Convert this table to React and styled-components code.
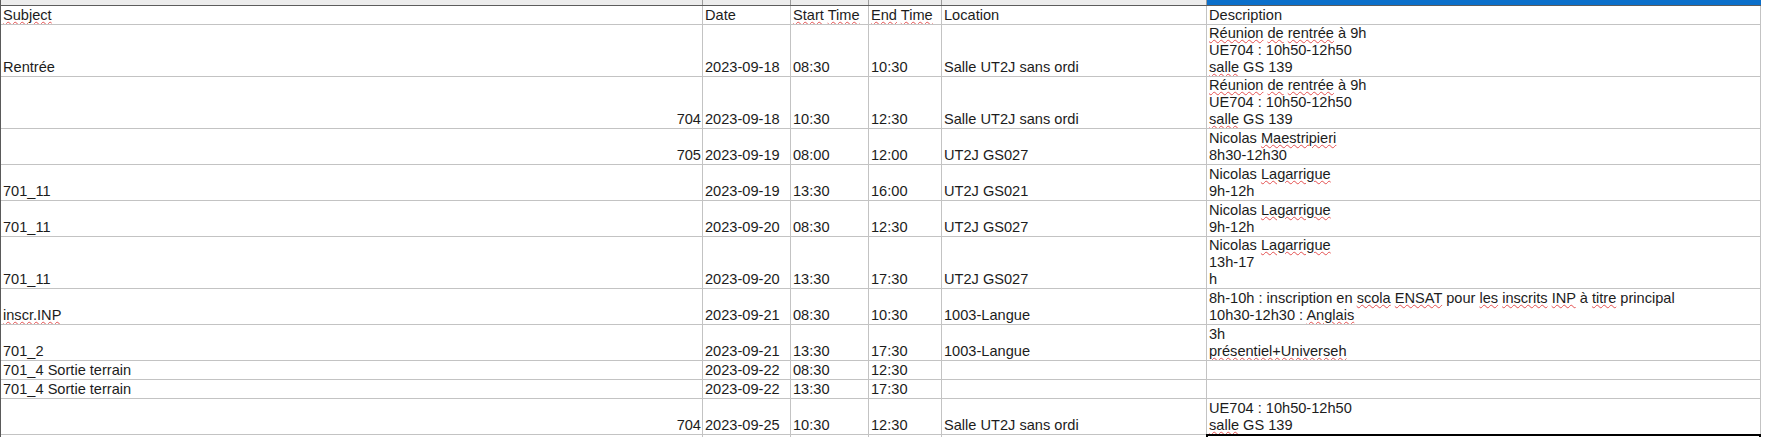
import React from 'react';
import styled, { createGlobalStyle, css } from 'styled-components';

const GlobalStyle = createGlobalStyle`
  html, body { margin: 0; padding: 0; background: #ffffff; }
  body { font-family: "Liberation Sans", Arial, sans-serif; }
`;

const COLS = '702px 88px 78px 73px 265px 554px';

const Sheet = styled.div`
  width: 1773px;
  height: 437px;
  overflow: hidden;
  background: #ffffff;
`;

const Grid = styled.div`
  width: 1761px;
  min-height: 437px;
  box-sizing: border-box;
  border-left: 1px solid #5a5a5a;
`;

const HeaderStrip = styled.div`
  display: grid;
  grid-template-columns: ${COLS};
  height: 6px;
  box-sizing: border-box;
  border-bottom: 1px solid #5c5c5c;
`;

const StripCell = styled.div`
  background: ${(p) => (p.$active ? '#0b6fca' : '#ececec')};
  border-right: 1px solid ${(p) => (p.$active ? '#0b6fca' : '#9c9c9c')};
`;

const Row = styled.div`
  display: grid;
  grid-template-columns: ${COLS};
  height: ${(p) => p.$h}px;
  border-bottom: 1px solid #c3c3c3;
`;

const Cell = styled.div`
  position: relative;
  display: flex;
  flex-direction: column;
  justify-content: flex-end;
  align-items: ${(p) => (p.$right ? 'flex-end' : 'flex-start')};
  padding: ${(p) => (p.$right ? '0 1px 0 0' : '0 0 0 2px')};
  border-right: 1px solid #c3c3c3;
  overflow: hidden;
  font-size: 14.6px;
  line-height: 17px;
  color: #1c1c1c;
  white-space: pre;
  ${(p) =>
    p.$cursor &&
    css`
      overflow: visible;
      &::before {
        content: '';
        position: absolute;
        top: -1px;
        left: -1px;
        right: -1px;
        height: 30px;
        border: 2px solid #000;
      }
    `}
`;

const Line = styled.span`
  display: block;
  height: 17px;
`;

const Misspelled = styled.span`
  text-decoration-line: underline;
  text-decoration-style: wavy;
  text-decoration-color: #e45050;
  text-decoration-thickness: 1px;
  text-underline-offset: 1px;
`;

/* words wrapped in [ ] get the spell-check underline */
const renderText = (s) => {
  const parts = s.split(/(\[[^\]]+\])/g).filter((x) => x !== '');
  return parts.map((p, i) =>
    p.startsWith('[') ? <Misspelled key={i}>{p.slice(1, -1)}</Misspelled> : <React.Fragment key={i}>{p}</React.Fragment>
  );
};

const CellText = ({ text }) => {
  if (!text) return null;
  return text.split('\n').map((l, i) => <Line key={i}>{renderText(l)}</Line>);
};

const rows = [
  { h: 18, subject: '[Subject]', date: 'Date', start: '[Start] [Time]', end: '[End] [Time]', loc: 'Location', desc: 'Description' },
  { h: 51, subject: 'Rentrée', date: '2023-09-18', start: '08:30', end: '10:30', loc: 'Salle UT2J sans ordi', desc: '[Réunion] [de] [rentrée] à 9h\nUE704 : 10h50-12h50\n[salle] GS 139' },
  { h: 51, subject: '704', num: true, date: '2023-09-18', start: '10:30', end: '12:30', loc: 'Salle UT2J sans ordi', desc: '[Réunion] [de] [rentrée] à 9h\nUE704 : 10h50-12h50\n[salle] GS 139' },
  { h: 35, subject: '705', num: true, date: '2023-09-19', start: '08:00', end: '12:00', loc: 'UT2J GS027', desc: 'Nicolas [Maestripieri]\n8h30-12h30' },
  { h: 35, subject: '701_11', date: '2023-09-19', start: '13:30', end: '16:00', loc: 'UT2J GS021', desc: 'Nicolas [Lagarrigue]\n9h-12h' },
  { h: 35, subject: '701_11', date: '2023-09-20', start: '08:30', end: '12:30', loc: 'UT2J GS027', desc: 'Nicolas [Lagarrigue]\n9h-12h' },
  { h: 51, subject: '701_11', date: '2023-09-20', start: '13:30', end: '17:30', loc: 'UT2J GS027', desc: 'Nicolas [Lagarrigue]\n13h-17\nh' },
  { h: 35, subject: '[inscr.INP]', date: '2023-09-21', start: '08:30', end: '10:30', loc: '1003-Langue', desc: '8h-10h : inscription en [scola] [ENSAT] pour [les] [inscrits] [INP] à [titre] principal\n10h30-12h30 : [Anglais]' },
  { h: 35, subject: '701_2', date: '2023-09-21', start: '13:30', end: '17:30', loc: '1003-Langue', desc: '3h\n[présentiel+Universeh]' },
  { h: 18, subject: '701_4 Sortie terrain', date: '2023-09-22', start: '08:30', end: '12:30', loc: '', desc: '' },
  { h: 18, subject: '701_4 Sortie terrain', date: '2023-09-22', start: '13:30', end: '17:30', loc: '', desc: '' },
  { h: 35, subject: '704', num: true, date: '2023-09-25', start: '10:30', end: '12:30', loc: 'Salle UT2J sans ordi', desc: 'UE704 : 10h50-12h50\n[salle] GS 139' },
];

export default function App() {
  return (
    <>
      <GlobalStyle />
      <Sheet>
        <Grid>
          <HeaderStrip>
            <StripCell />
            <StripCell />
            <StripCell />
            <StripCell />
            <StripCell />
            <StripCell $active />
          </HeaderStrip>
          {rows.map((r, i) => (
            <Row key={i} $h={r.h}>
              <Cell $right={r.num}><CellText text={r.subject} /></Cell>
              <Cell><CellText text={r.date} /></Cell>
              <Cell><CellText text={r.start} /></Cell>
              <Cell><CellText text={r.end} /></Cell>
              <Cell><CellText text={r.loc} /></Cell>
              <Cell><CellText text={r.desc} /></Cell>
            </Row>
          ))}
          <Row $h={18}>
            <Cell />
            <Cell />
            <Cell />
            <Cell />
            <Cell />
            <Cell $cursor />
          </Row>
        </Grid>
      </Sheet>
    </>
  );
}
